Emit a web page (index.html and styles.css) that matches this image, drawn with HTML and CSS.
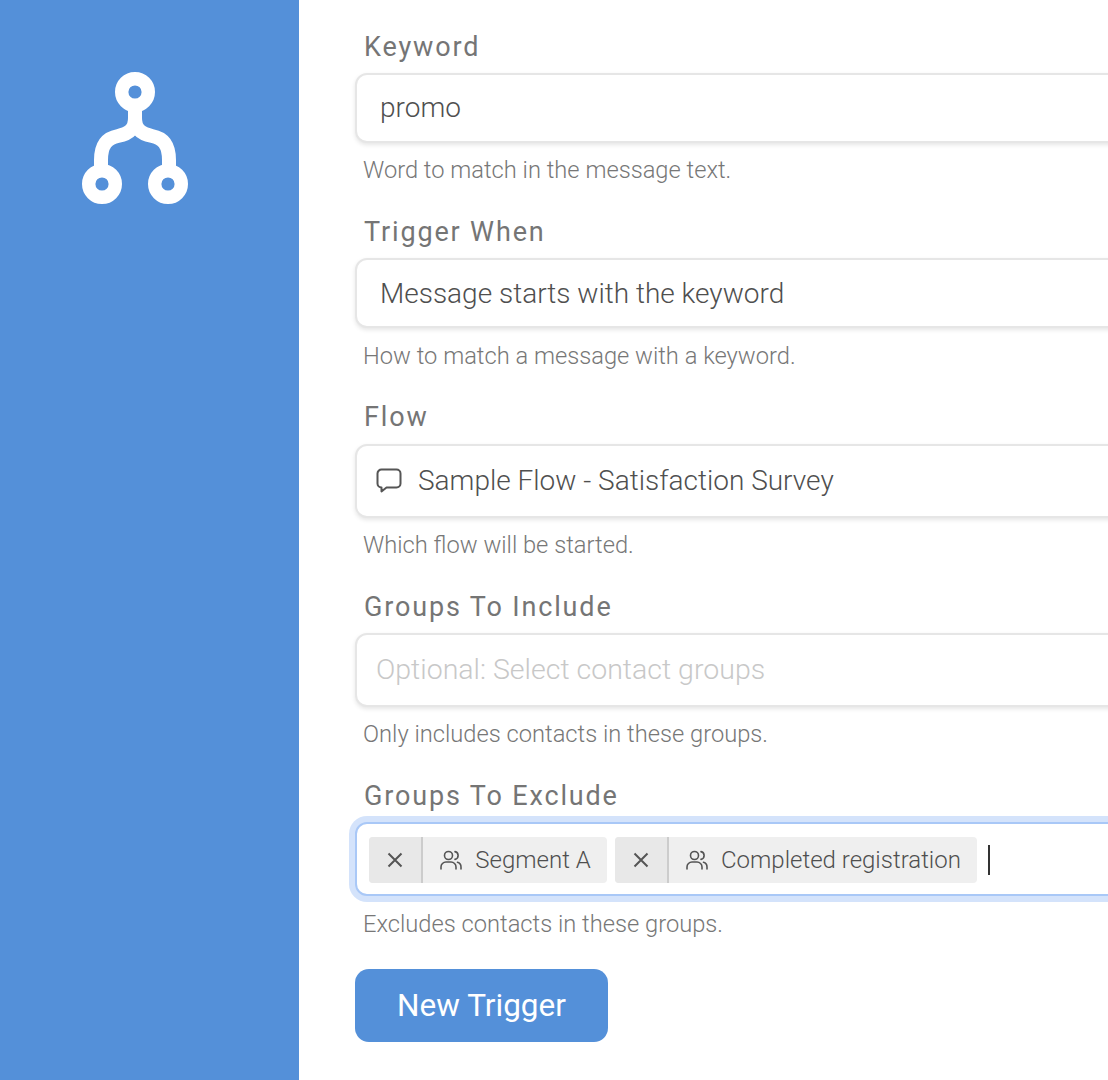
FILE: index.html
```html
<!DOCTYPE html>
<html lang="en">
<head>
    <meta charset="UTF-8">
    <meta name="viewport" content="width=device-width, initial-scale=1.0">
    <title>New Trigger</title>
    <link rel="stylesheet" href="styles.css">
</head>
<body>
    <div class="sidebar">
        <svg class="logo" viewBox="0 0 108 134" width="108" height="134">
            <g fill="none" stroke="#fff">
                <circle cx="54" cy="21" r="13.3" stroke-width="13.4"/>
                <circle cx="21" cy="113" r="13.3" stroke-width="13.4"/>
                <circle cx="87" cy="113" r="13.3" stroke-width="13.4"/>
                <path stroke-width="14" d="M54 38V47C54 59 47 63 37 65C26 67 20 74 20 89V98"/>
                <path stroke-width="14" d="M54 38V47C54 59 61 63 71 65C82 67 88 74 88 89V98"/>
            </g>
        </svg>
    </div>

    <div class="main">
        <div class="field">
            <label class="field-label">Keyword</label>
            <div class="box box-text">promo</div>
            <p class="help">Word to match in the message text.</p>
        </div>

        <div class="field">
            <label class="field-label">Trigger When</label>
            <div class="box box-text">Message starts with the keyword</div>
            <p class="help">How to match a message with a keyword.</p>
        </div>

        <div class="field">
            <label class="field-label">Flow</label>
            <div class="box box-tall box-flow">
                <svg class="flow-icon" viewBox="0 0 26 25" width="26" height="25">
                    <path d="M1.5 5.5A4 4 0 0 1 5.5 1.5H20.5A4 4 0 0 1 24.5 5.5V15.5A4 4 0 0 1 20.5 19.5H10.5L5.5 23.5V19.5A4 4 0 0 1 1.5 15.5Z"/>
                </svg>
                <span>Sample Flow - Satisfaction Survey</span>
            </div>
            <p class="help">Which flow will be started.</p>
        </div>

        <div class="field">
            <label class="field-label">Groups To Include</label>
            <div class="box box-tall box-placeholder">Optional: Select contact groups</div>
            <p class="help">Only includes contacts in these groups.</p>
        </div>

        <div class="field">
            <label class="field-label">Groups To Exclude</label>
            <div class="box box-tall box-focus">
                <div class="chip">
                    <span class="chip-remove">
                        <svg viewBox="0 0 16 16" width="16" height="16"><path d="M1.5 1.5L14.5 14.5M14.5 1.5L1.5 14.5"/></svg>
                    </span>
                    <span class="chip-label">
                        <svg class="group-icon" viewBox="0 0 24 24" width="24" height="24">
                            <circle cx="9.5" cy="7.5" r="4"/>
                            <path d="M2 21V19A5 5 0 0 1 7 14H12A5 5 0 0 1 17 19V21"/>
                            <path d="M16 3.6A4 4 0 0 1 16 11.4"/>
                            <path d="M18.5 14.2A5 5 0 0 1 22 19V21"/>
                        </svg>
                        Segment A
                    </span>
                </div>
                <div class="chip">
                    <span class="chip-remove">
                        <svg viewBox="0 0 16 16" width="16" height="16"><path d="M1.5 1.5L14.5 14.5M14.5 1.5L1.5 14.5"/></svg>
                    </span>
                    <span class="chip-label">
                        <svg class="group-icon" viewBox="0 0 24 24" width="24" height="24">
                            <circle cx="9.5" cy="7.5" r="4"/>
                            <path d="M2 21V19A5 5 0 0 1 7 14H12A5 5 0 0 1 17 19V21"/>
                            <path d="M16 3.6A4 4 0 0 1 16 11.4"/>
                            <path d="M18.5 14.2A5 5 0 0 1 22 19V21"/>
                        </svg>
                        Completed registration
                    </span>
                </div>
                <span class="caret"></span>
            </div>
            <p class="help">Excludes contacts in these groups.</p>
        </div>

        <button class="submit">New Trigger</button>
    </div>
</body>
</html>
```

FILE: styles.css
```css
body {
    margin: 0;
    display: flex;
    width: 1108px;
    height: 1080px;
    overflow: hidden;
    background-color: #ffffff;
    font-family: Roboto, "Liberation Sans", sans-serif;
    color: #4f4f4f;
}
.sidebar {
    flex: 0 0 299px;
    box-sizing: border-box;
    padding: 71px 0 0 81px;
    background-color: #5490d9;
}
.logo {
    display: block;
}
.main {
    flex: 0 0 809px;
    box-sizing: border-box;
    padding: 29.5px 0 0 56px;
    overflow: hidden;
}
.field {
    width: 900px;
    margin-bottom: 31.7px;
}
.field-label {
    display: block;
    height: 34px;
    margin-left: 9px;
    font-size: 27px;
    line-height: 34px;
    font-weight: 450;
    letter-spacing: 1.85px;
    color: #757575;
}
.box {
    box-sizing: border-box;
    height: 70px;
    margin-top: 9.3px;
    display: flex;
    align-items: center;
    background-color: #ffffff;
    border: 2px solid #e6e6e6;
    border-radius: 12px;
    box-shadow: 0 2px 4px rgba(0, 0, 0, 0.1);
    font-size: 28px;
    font-weight: 300;
}
.box-text {
    padding-left: 23px;
}
.box-tall {
    height: 74px;
}
.box-flow {
    padding-left: 19px;
}
.flow-icon {
    margin-right: 16px;
    fill: none;
    stroke: #555555;
    stroke-width: 2;
    stroke-linejoin: round;
}
.box-placeholder {
    padding-left: 19px;
    color: #c8c8c8;
    font-size: 28.5px;
}
.box-focus {
    padding: 1px 0 0 12px;
    border-color: #a9c8f7;
    box-shadow: 0 0 0 6px #d4e3fb;
}
.chip {
    display: flex;
    height: 46px;
    margin-right: 8px;
    border-radius: 4px;
    overflow: hidden;
    background-color: #efefef;
    font-size: 24px;
}
.chip-remove {
    display: flex;
    align-items: center;
    justify-content: center;
    box-sizing: border-box;
    width: 54px;
    background-color: #e8e8e8;
    border-right: 2px solid #cccccc;
}
.chip-remove svg {
    fill: none;
    stroke: #555555;
    stroke-width: 2;
}
.chip-label {
    display: flex;
    align-items: center;
    padding: 0 16px;
    white-space: nowrap;
}
.group-icon {
    margin-right: 12.3px;
    fill: none;
    stroke: #555555;
    stroke-width: 1.6;
    stroke-linecap: round;
}
.caret {
    width: 2px;
    height: 30px;
    margin-left: 3px;
    background-color: #333333;
}
.help {
    margin: 0 0 0 8px;
    height: 26px;
    padding-top: 14.4px;
    font-size: 23.7px;
    line-height: 26px;
    font-weight: 300;
    color: #777777;
}
.submit {
    display: block;
    width: 253px;
    height: 73px;
    margin-top: 32.7px;
    background-color: #5490d9;
    color: #ffffff;
    border: none;
    border-radius: 14px;
    font-family: inherit;
    font-size: 31.5px;
    font-weight: 450;
    cursor: pointer;
}
```
